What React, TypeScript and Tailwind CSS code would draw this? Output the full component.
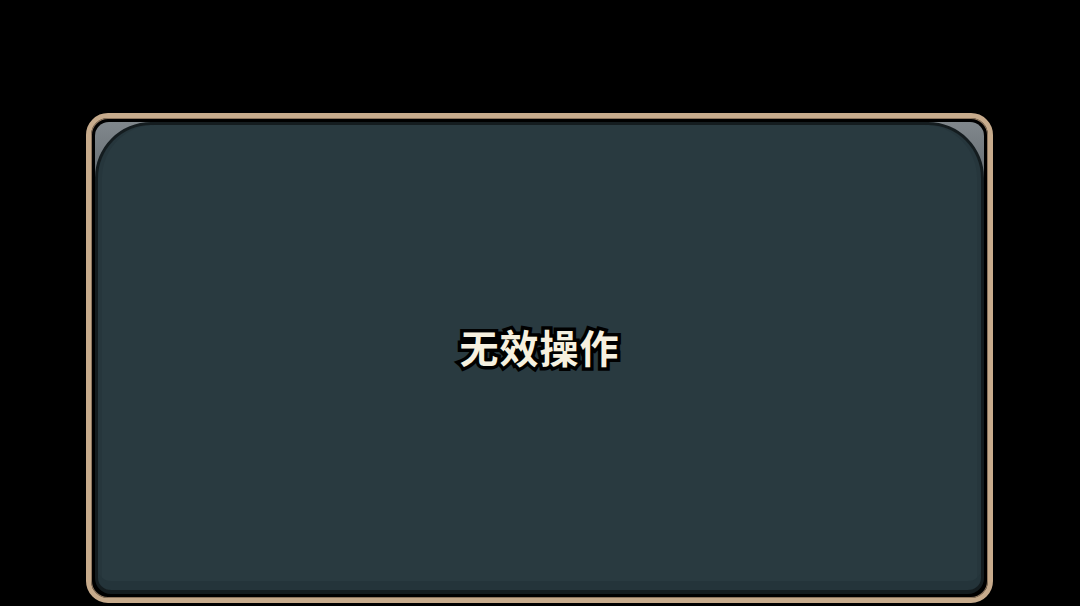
import React from "react";

const App = () => {
  return (
    <div className="w-[1080px] h-[606px] bg-black pt-[113px] pl-[86px] overflow-hidden">
      {/* Outer tan frame */}
      <div className="w-[907px] h-[490px] rounded-[22px] border-[5px] border-[#c7ab8c] bg-black p-[4px] shadow-[inset_0_0_0_1px_#8d755e]">
        {/* Grey corners behind the panel */}
        <div className="w-full h-full rounded-[14px] bg-[linear-gradient(to_bottom,#80878c_0px,#656c71_62px,#000_63px)]">
          {/* Main teal panel */}
          <div className="w-full h-full rounded-tl-[56px] rounded-tr-[56px] rounded-bl-[16px] rounded-br-[16px] border-[3px] border-b-[4px] border-[#141c1f] bg-[#293a40] shadow-[inset_0_-9px_0_#24343a,inset_4px_0_0_#26363c,inset_-4px_0_0_#26363c] flex items-center justify-center pb-[22px]">
            <span
              className="text-[39px] font-bold text-[#f6f0df] tracking-[1px] [-webkit-text-stroke:7px_#000] [paint-order:stroke_fill]"
              style={{ fontFamily: '"Noto Sans CJK SC", "Noto Sans", sans-serif' }}
            >
              无效操作
            </span>
          </div>
        </div>
      </div>
    </div>
  );
};

export default App;
